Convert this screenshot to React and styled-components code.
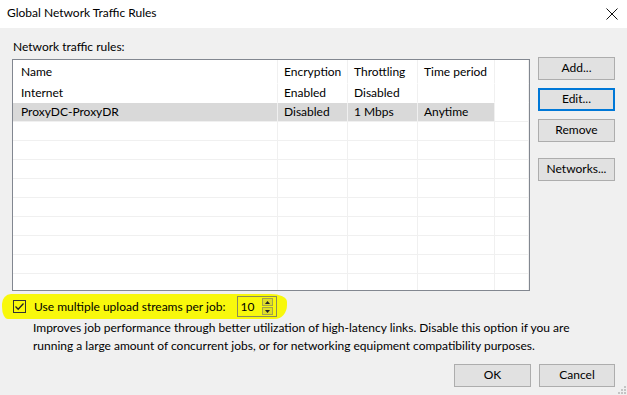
import React from 'react'
import styled, { createGlobalStyle } from 'styled-components'

const GlobalStyle = createGlobalStyle`
    html, body {
        margin: 0;
        padding: 0;
        background: #f0f0f0;
    }
    body {
        font-family: Lato, "Noto Sans", "Liberation Sans", sans-serif;
        font-size: 12px;
        color: #000;
    }
`

const Window = styled.div`
    width: 627px;
    height: 395px;
    display: flex;
    flex-direction: column;
    background: #f0f0f0;
    position: relative;
    overflow: hidden;
`

const TitleBar = styled.div`
    height: 28px;
    flex: none;
    background: #fff;
    display: flex;
    align-items: center;
    justify-content: space-between;
    padding: 0 9px 0 7px;
    box-sizing: border-box;
`

const Title = styled.span`
    font-size: 12px;
    line-height: 16px;
    padding-bottom: 2px;
`

const Body = styled.div`
    flex: 1;
    display: flex;
    flex-direction: column;
    padding: 11px 12px 0 12px;
`

const SectionLabel = styled.div`
    line-height: 16px;
    height: 16px;
    padding-left: 1px;
`

const Main = styled.div`
    display: flex;
    align-items: flex-start;
    gap: 8px;
    margin-top: 2px;
`

const ListBox = styled.div`
    width: 518px;
    height: 232px;
    box-sizing: border-box;
    margin-top: 2px;
    border: 1px solid #828790;
    background: #fff;
    overflow: hidden;
`

const Grid = styled.div`
    display: grid;
    grid-template-columns: 265px 70px 70px 77px 1fr;
    grid-auto-rows: 19px;
    grid-template-rows: 24px;
`

const Cell = styled.div`
    box-sizing: border-box;
    padding: 0 0 0 ${p => (p.$first ? 8 : 6)}px;
    display: flex;
    align-items: center;
    white-space: nowrap;
    border-right: 1px solid #f0f0f0;
    border-bottom: 1px solid ${p => (p.$lined ? '#f0f0f0' : 'transparent')};
    background: ${p => (p.$selected ? '#d9d9d9' : 'transparent')};
    line-height: 16px;
`

const ButtonColumn = styled.div`
    width: 77px;
    display: flex;
    flex-direction: column;
    gap: 8px;
`

const Button = styled.button`
    width: ${p => p.$width || 77}px;
    height: 23px;
    box-sizing: border-box;
    padding: 0 0 2px;
    background: #e1e1e1;
    border: ${p => (p.$focused ? '2px solid #0078d7' : '1px solid #adadad')};
    font-family: inherit;
    font-size: 12px;
    color: #000;
    margin-top: ${p => p.$gapAbove || 0}px;
`

const Highlight = styled.div`
    display: flex;
    align-items: center;
    align-self: flex-start;
    margin: 3px 0 0 -10px;
    padding: 0 10px 0 11px;
    height: 25px;
    background: #f8f80c;
    border-radius: 9px 16px 12px 6px / 10px 8px 14px 12px;
`

const CheckBox = styled.span`
    width: 13px;
    height: 13px;
    box-sizing: border-box;
    border: 1px solid #333;
    display: inline-flex;
    align-items: center;
    justify-content: center;
    margin-right: 8px;
`

const OptionText = styled.span`
    line-height: 16px;
    margin-right: 12px;
`

const Spin = styled.div`
    width: 40px;
    height: 21px;
    box-sizing: border-box;
    border: 1px solid #8c8c58;
    display: flex;
    align-items: center;
    justify-content: space-between;
    padding: 0 3px 0 2px;
`

const SpinButtons = styled.div`
    display: flex;
    flex-direction: column;
    gap: 1px;
`

const SpinButton = styled.span`
    width: 11px;
    height: 8px;
    box-sizing: border-box;
    border: 1px solid #a4a44a;
    background: #dede28;
    display: flex;
    align-items: center;
    justify-content: center;
`

const Description = styled.p`
    margin: 0;
    padding-left: 21px;
    line-height: 18px;
`

const Footer = styled.div`
    display: flex;
    justify-content: flex-end;
    gap: 8px;
    margin-top: 9px;
`

const Grip = styled.svg`
    position: absolute;
    right: 1px;
    bottom: 1px;
`

const columns = ['Name', 'Encryption', 'Throttling', 'Time period']
const rules = [
    { cells: ['Internet', 'Enabled', 'Disabled', ''] },
    { cells: ['ProxyDC-ProxyDR', 'Disabled', '1 Mbps', 'Anytime'], selected: true },
]
const emptyRows = 9

const Row = ({ cells, selected, lined }) => (
    <>
        {cells.map((c, i) => (
            <Cell key={i} $first={i === 0} $selected={selected} $lined={lined}>{c}</Cell>
        ))}
        <Cell $lined={lined} />
    </>
)

const App = () => (
    <>
        <GlobalStyle />
        <Window>
            <TitleBar>
                <Title>Global Network Traffic Rules</Title>
                <svg width="12" height="12" viewBox="0 0 12 12">
                    <path d="M0.5 0.5 L11.5 11.5 M11.5 0.5 L0.5 11.5" stroke="#111" strokeWidth="1" fill="none" />
                </svg>
            </TitleBar>
            <Body>
                <SectionLabel>Network traffic rules:</SectionLabel>
                <Main>
                    <ListBox>
                        <Grid>
                            <Row cells={columns} />
                            {rules.map((r, i) => (
                                <Row key={i} cells={r.cells} selected={r.selected} lined={r.selected} />
                            ))}
                            {Array.from({ length: emptyRows }).map((_, i) => (
                                <Row key={'e' + i} cells={['', '', '', '']} lined />
                            ))}
                        </Grid>
                    </ListBox>
                    <ButtonColumn>
                        <Button>Add...</Button>
                        <Button $focused>Edit...</Button>
                        <Button>Remove</Button>
                        <Button $gapAbove={8}>Networks...</Button>
                    </ButtonColumn>
                </Main>
                <Highlight>
                    <CheckBox>
                        <svg width="11" height="11" viewBox="0 0 11 11">
                            <polyline points="1.5,5.5 4.2,8.2 9.5,2.5" stroke="#222" strokeWidth="1.3" fill="none" />
                        </svg>
                    </CheckBox>
                    <OptionText>Use multiple upload streams per job:</OptionText>
                    <Spin>
                        <span>10</span>
                        <SpinButtons>
                            <SpinButton>
                                <svg width="5" height="3" viewBox="0 0 5 3"><path d="M0 3 L2.5 0 L5 3 Z" fill="#222" /></svg>
                            </SpinButton>
                            <SpinButton>
                                <svg width="5" height="3" viewBox="0 0 5 3"><path d="M0 0 L2.5 3 L5 0 Z" fill="#222" /></svg>
                            </SpinButton>
                        </SpinButtons>
                    </Spin>
                </Highlight>
                <Description>
                    Improves job performance through better utilization of high-latency links. Disable this option if you are
                    <br />
                    running a large amount of concurrent jobs, or for networking equipment compatibility purposes.
                </Description>
                <Footer>
                    <Button>OK</Button>
                    <Button $width={76}>Cancel</Button>
                </Footer>
            </Body>
            <Grip width="8" height="8" viewBox="0 0 8 8">
                {[[6, 0], [6, 3], [3, 3], [6, 6], [3, 6], [0, 6]].map(([x, y], i) => (
                    <rect key={i} x={x} y={y} width="2" height="2" fill="#c4c4c4" />
                ))}
            </Grip>
        </Window>
    </>
)

export default App
